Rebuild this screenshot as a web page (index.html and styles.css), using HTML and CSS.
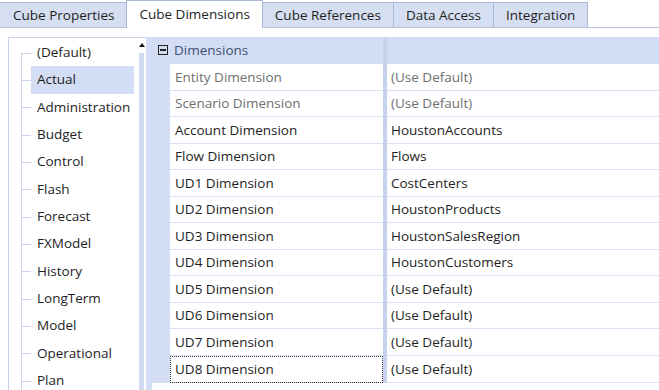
FILE: index.html
```html
<!DOCTYPE html>
<html lang="en">
<head>
    <meta charset="UTF-8">
    <title>Cube Dimensions</title>
    <link rel="stylesheet" href="styles.css">
</head>
<body>
    <!-- Tab strip -->
    <div class="tabs">
        <div class="tab tab-first">Cube Properties</div>
        <div class="tab active">Cube Dimensions</div>
        <div class="tab">Cube References</div>
        <div class="tab">Data Access</div>
        <div class="tab">Integration</div>
    </div>

    <div class="content">
        <!-- Scenario type tree -->
        <div class="tree-panel">
            <ul class="tree">
                <li>(Default)</li>
                <li class="selected">Actual</li>
                <li>Administration</li>
                <li>Budget</li>
                <li>Control</li>
                <li>Flash</li>
                <li>Forecast</li>
                <li>FXModel</li>
                <li>History</li>
                <li>LongTerm</li>
                <li>Model</li>
                <li>Operational</li>
                <li>Plan</li>
            </ul>
            <div class="scrollbar">
                <span class="arrow"></span>
                <span class="track"></span>
            </div>
        </div>

        <!-- Property grid -->
        <div class="grid">
            <div class="grid-head">
                <span class="gutter"><span class="toggle"></span></span>
                <span class="head-title">Dimensions</span>
                <span class="split"></span>
                <span></span>
            </div>
            <div class="row muted"><span class="gutter"></span><div class="name">Entity Dimension</div><span class="split"></span><div class="value">(Use Default)</div></div>
            <div class="row muted"><span class="gutter"></span><div class="name">Scenario Dimension</div><span class="split"></span><div class="value">(Use Default)</div></div>
            <div class="row"><span class="gutter"></span><div class="name">Account Dimension</div><span class="split"></span><div class="value">HoustonAccounts</div></div>
            <div class="row"><span class="gutter"></span><div class="name">Flow Dimension</div><span class="split"></span><div class="value">Flows</div></div>
            <div class="row"><span class="gutter"></span><div class="name">UD1 Dimension</div><span class="split"></span><div class="value">CostCenters</div></div>
            <div class="row"><span class="gutter"></span><div class="name">UD2 Dimension</div><span class="split"></span><div class="value">HoustonProducts</div></div>
            <div class="row"><span class="gutter"></span><div class="name">UD3 Dimension</div><span class="split"></span><div class="value">HoustonSalesRegion</div></div>
            <div class="row"><span class="gutter"></span><div class="name">UD4 Dimension</div><span class="split"></span><div class="value">HoustonCustomers</div></div>
            <div class="row"><span class="gutter"></span><div class="name">UD5 Dimension</div><span class="split"></span><div class="value">(Use Default)</div></div>
            <div class="row"><span class="gutter"></span><div class="name">UD6 Dimension</div><span class="split"></span><div class="value">(Use Default)</div></div>
            <div class="row"><span class="gutter"></span><div class="name">UD7 Dimension</div><span class="split"></span><div class="value">(Use Default)</div></div>
            <div class="row focused"><span class="gutter"></span><div class="name">UD8 Dimension</div><span class="split"></span><div class="value">(Use Default)</div></div>
        </div>
    </div>
</body>
</html>
```

FILE: styles.css
```css
body {
    margin: 0;
    padding: 0;
    background: white;
    color: #1e1e1e;
    font-family: 'Open Sans', 'Noto Sans', sans-serif;
    font-size: 13.5px;
    overflow: hidden;
}

/* tabs */
.tabs {
    display: flex;
    align-items: flex-end;
    height: 27px;
    border-bottom: 1px solid #b4c3de;
}

.tab {
    box-sizing: border-box;
    height: 25px;
    padding: 0 12px;
    line-height: 24px;
    background: #d5dff1;
    border: 1px solid #a9bad8;
    border-bottom: none;
    margin-left: -1px;
}

.tab-first {
    margin-left: 0;
    border-left: none;
    padding-left: 13px;
}

.tab.active {
    height: 28px;
    margin-bottom: -1px;
    background: white;
    line-height: 27px;
    position: relative;
    z-index: 1;
}

/* main area */
.content {
    display: flex;
    padding: 9px 0 0 8px;
    height: calc(100vh - 37px);
    overflow: hidden;
}

.tree-panel {
    display: flex;
    width: 137px;
    border-left: 1px solid #c6d2e8;
    border-top: 1px solid #c6d2e8;
}

.tree {
    list-style: none;
    margin: 0;
    padding: 1px 3px 0 22px;
    flex: 1;
}

.tree li {
    position: relative;
    height: 27.33px;
    line-height: 27px;
    padding-left: 6px;
    white-space: nowrap;
}

.tree li::before {
    content: "";
    position: absolute;
    left: -10px;
    top: 0;
    bottom: 0;
    border-left: 1px solid #c9d5ea;
}

.tree li:first-child::before {
    top: 50%;
}

.tree li::after {
    content: "";
    position: absolute;
    left: -10px;
    width: 10px;
    top: 50%;
    border-top: 1px solid #c9d5ea;
}

.tree li.selected {
    background: #d3ddf3;
}

.scrollbar {
    width: 9px;
    display: flex;
    flex-direction: column;
    align-items: center;
    padding-top: 5px;
}

.arrow {
    width: 0;
    height: 0;
    border-left: 3px solid transparent;
    border-right: 3px solid transparent;
    border-bottom: 4px solid #111;
}

.track {
    width: 5px;
    flex: 1;
    margin-top: 6px;
    background: #cfdaf1;
}

/* property grid */
.grid {
    flex: 1;
    border-left: 6px solid #d3def5;
}

.grid-head,
.row {
    display: grid;
    grid-template-columns: 18px 213px 4px 1fr;
    height: 26.55px;
    line-height: 26px;
}

.grid-head {
    background: #d3def5;
    color: #3f4f72;
    height: 26.5px;
}

.gutter {
    background: #d3def5;
    display: flex;
    align-items: center;
    justify-content: center;
}

.toggle {
    box-sizing: border-box;
    width: 10px;
    height: 10px;
    border: 1px solid #222;
    position: relative;
    margin-left: 4px;
}

.toggle::after {
    content: "";
    position: absolute;
    left: 1px;
    right: 1px;
    top: 3px;
    border-top: 2px solid #222;
}

.head-title {
    padding-left: 4px;
}

.split {
    background: #c5d3ee;
}

.name,
.value {
    padding-left: 5px;
    border-bottom: 1px solid #d8e1f3;
    white-space: nowrap;
}

.value {
    padding-left: 4px;
}

.row.muted {
    color: #6e6e6e;
}

.row.focused .name {
    outline: 1px dotted #333;
    outline-offset: -1px;
}
```
